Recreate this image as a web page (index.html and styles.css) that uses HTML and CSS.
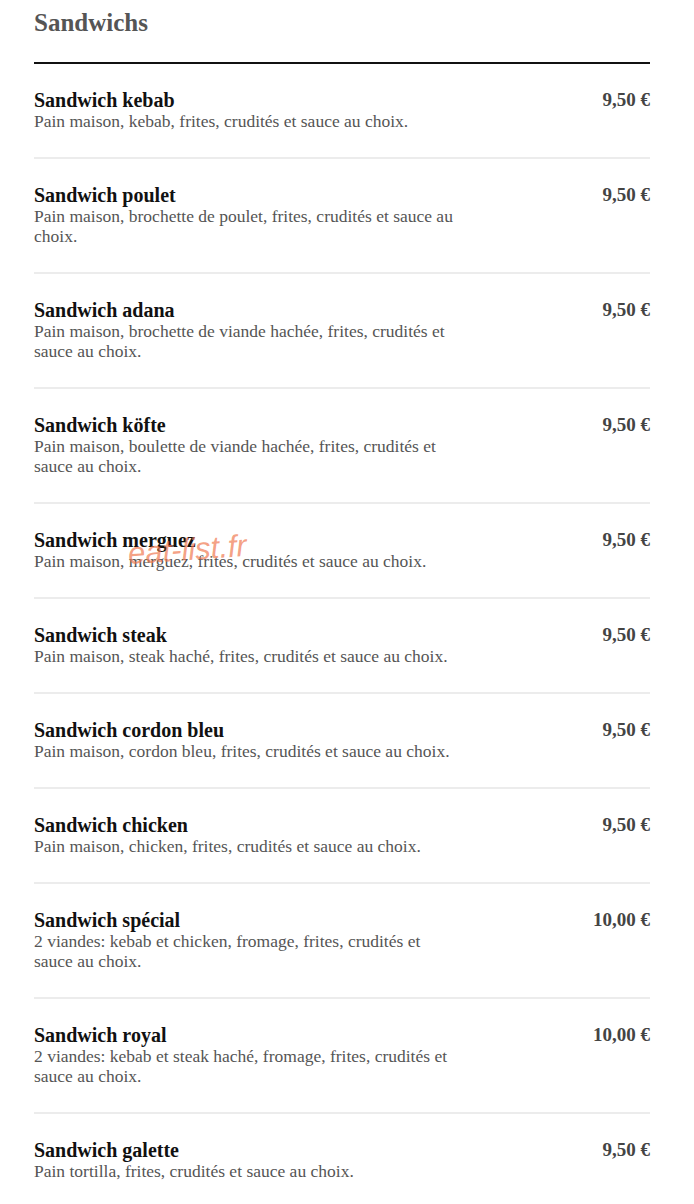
FILE: index.html
```html
<!DOCTYPE html>
<html lang="fr">
<head>
    <meta charset="UTF-8">
    <meta name="viewport" content="width=device-width, initial-scale=1.0">
    <title>Sandwichs</title>
    <link rel="stylesheet" href="styles.css">
</head>
<body>
    <div class="menu">
        <h2 class="menu-title">Sandwichs</h2>
        <div class="items">
            <div class="item">
                <div class="item-text">
                    <div class="item-name">Sandwich kebab</div>
                    <div class="item-desc">Pain maison, kebab, frites, crudités et sauce au choix.</div>
                </div>
                <div class="item-price">9,50 €</div>
            </div>
            <div class="item">
                <div class="item-text">
                    <div class="item-name">Sandwich poulet</div>
                    <div class="item-desc">Pain maison, brochette de poulet, frites, crudités et sauce au choix.</div>
                </div>
                <div class="item-price">9,50 €</div>
            </div>
            <div class="item">
                <div class="item-text">
                    <div class="item-name">Sandwich adana</div>
                    <div class="item-desc">Pain maison, brochette de viande hachée, frites, crudités et sauce au choix.</div>
                </div>
                <div class="item-price">9,50 €</div>
            </div>
            <div class="item">
                <div class="item-text">
                    <div class="item-name">Sandwich köfte</div>
                    <div class="item-desc">Pain maison, boulette de viande hachée, frites, crudités et sauce au choix.</div>
                </div>
                <div class="item-price">9,50 €</div>
            </div>
            <div class="item">
                <div class="item-text">
                    <div class="item-name">Sandwich merguez</div>
                    <div class="item-desc">Pain maison, merguez, frites, crudités et sauce au choix.</div>
                </div>
                <div class="item-price">9,50 €</div>
                <span class="watermark">eat-list.fr</span>
            </div>
            <div class="item">
                <div class="item-text">
                    <div class="item-name">Sandwich steak</div>
                    <div class="item-desc">Pain maison, steak haché, frites, crudités et sauce au choix.</div>
                </div>
                <div class="item-price">9,50 €</div>
            </div>
            <div class="item">
                <div class="item-text">
                    <div class="item-name">Sandwich cordon bleu</div>
                    <div class="item-desc">Pain maison, cordon bleu, frites, crudités et sauce au choix.</div>
                </div>
                <div class="item-price">9,50 €</div>
            </div>
            <div class="item">
                <div class="item-text">
                    <div class="item-name">Sandwich chicken</div>
                    <div class="item-desc">Pain maison, chicken, frites, crudités et sauce au choix.</div>
                </div>
                <div class="item-price">9,50 €</div>
            </div>
            <div class="item">
                <div class="item-text">
                    <div class="item-name">Sandwich spécial</div>
                    <div class="item-desc">2 viandes: kebab et chicken, fromage, frites, crudités et sauce au choix.</div>
                </div>
                <div class="item-price">10,00 €</div>
            </div>
            <div class="item">
                <div class="item-text">
                    <div class="item-name">Sandwich royal</div>
                    <div class="item-desc">2 viandes: kebab et steak haché, fromage, frites, crudités et sauce au choix.</div>
                </div>
                <div class="item-price">10,00 €</div>
            </div>
            <div class="item">
                <div class="item-text">
                    <div class="item-name">Sandwich galette</div>
                    <div class="item-desc">Pain tortilla, frites, crudités et sauce au choix.</div>
                </div>
                <div class="item-price">9,50 €</div>
            </div>
        </div>
    </div>
</body>
</html>
```

FILE: styles.css
```css
body, html {
    margin: 0;
    padding: 0;
    background-color: #fff;
    font-family: "Liberation Serif", "Times New Roman", serif;
}
.menu {
    width: 616px;
    margin-left: 34px;
}
.menu-title {
    margin: 8px 0 0;
    padding-bottom: 25px;
    font-size: 25px;
    line-height: 29px;
    font-weight: bold;
    color: #555;
    border-bottom: 2px solid #111;
}
.item {
    position: relative;
    display: flex;
    justify-content: space-between;
    align-items: flex-start;
    padding: 25px 0 26px;
    border-bottom: 2px solid #ececec;
}
.item:last-child {
    border-bottom: none;
}
.item-text {
    width: 426px;
}
.item-name {
    font-size: 20px;
    line-height: 22px;
    font-weight: bold;
    color: #111;
}
.item-desc {
    font-size: 17.5px;
    line-height: 20px;
    color: #555;
}
.item-price {
    font-size: 19px;
    line-height: 22px;
    font-weight: bold;
    color: #444;
}
.watermark {
    position: absolute;
    left: 94px;
    top: 28px;
    font-family: "Liberation Sans", Arial, sans-serif;
    font-style: italic;
    font-size: 31px;
    color: rgba(240, 120, 80, 0.7);
    transform: rotate(-4deg);
    pointer-events: none;
}
```
